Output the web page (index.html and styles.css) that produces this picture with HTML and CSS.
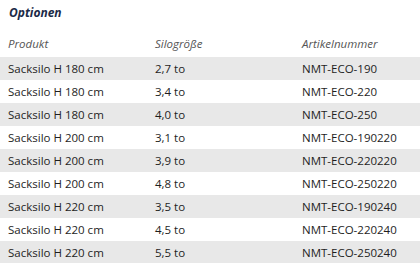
FILE: index.html
```html
<!DOCTYPE html>
<html lang="de">
<head>
<meta charset="utf-8">
<link rel="stylesheet" href="styles.css">
</head>
<body>
<h2 class="title">Optionen</h2>
<div class="table">
  <div class="row head"><span>Produkt</span><span>Silogröße</span><span>Artikelnummer</span></div>
  <div class="row alt"><span>Sacksilo H 180 cm</span><span>2,7 to</span><span>NMT-ECO-190</span></div>
  <div class="row"><span>Sacksilo H 180 cm</span><span>3,4 to</span><span>NMT-ECO-220</span></div>
  <div class="row alt"><span>Sacksilo H 180 cm</span><span>4,0 to</span><span>NMT-ECO-250</span></div>
  <div class="row"><span>Sacksilo H 200 cm</span><span>3,1 to</span><span>NMT-ECO-190220</span></div>
  <div class="row alt"><span>Sacksilo H 200 cm</span><span>3,9 to</span><span>NMT-ECO-220220</span></div>
  <div class="row"><span>Sacksilo H 200 cm</span><span>4,8 to</span><span>NMT-ECO-250220</span></div>
  <div class="row alt"><span>Sacksilo H 220 cm</span><span>3,5 to</span><span>NMT-ECO-190240</span></div>
  <div class="row"><span>Sacksilo H 220 cm</span><span>4,5 to</span><span>NMT-ECO-220240</span></div>
  <div class="row alt"><span>Sacksilo H 220 cm</span><span>5,5 to</span><span>NMT-ECO-250240</span></div>
</div>
</body>
</html>
```
FILE: styles.css
```css
html, body {
  margin: 0;
  padding: 0;
  background: #ffffff;
  font-family: "Open Sans", "Noto Sans", sans-serif;
}
.title {
  margin: 0;
  padding: 4px 8px 0 9px;
  height: 26px;
  font-size: 12px;
  font-weight: 700;
  font-style: italic;
  color: #1b2a47;
  line-height: 18px;
}
.table {
  display: flex;
  flex-direction: column;
}
.row {
  display: grid;
  grid-template-columns: 147px 145px 1fr;
  height: 23px;
  align-items: center;
  font-size: 11.5px;
  color: #1e1e1e;
}
.row span {
  padding-left: 8px;
}
.row span:nth-child(3) {
  padding-left: 10px;
}
.row.head {
  height: 27px;
  font-style: italic;
  color: #555555;
}
.row.alt {
  background: #e8e8e8;
}
```
